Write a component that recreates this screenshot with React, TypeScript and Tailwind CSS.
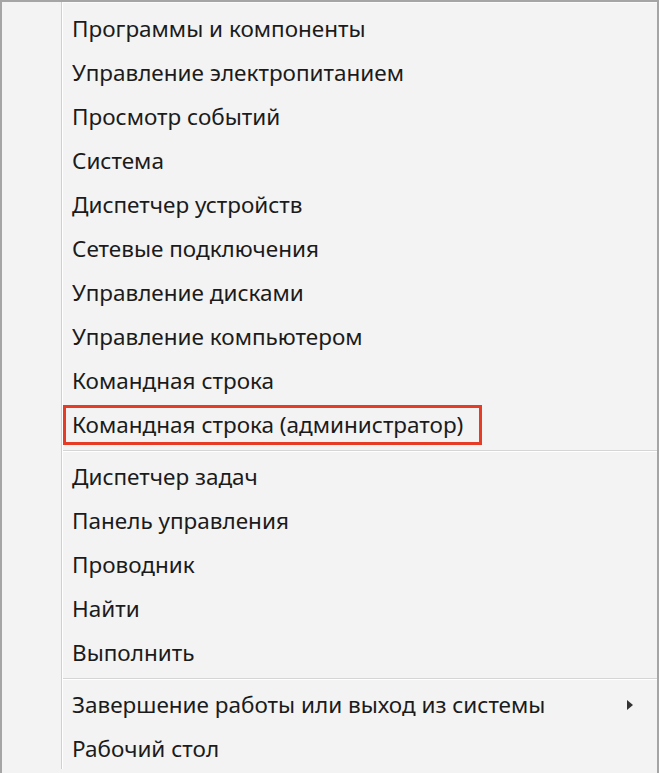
import React from 'react';

const group1 = [
  'Программы и компоненты',
  'Управление электропитанием',
  'Просмотр событий',
  'Система',
  'Диспетчер устройств',
  'Сетевые подключения',
  'Управление дисками',
  'Управление компьютером',
  'Командная строка',
];

const group2 = ['Диспетчер задач', 'Панель управления', 'Проводник', 'Найти', 'Выполнить'];

const Row: React.FC<{ label: string; arrow?: boolean }> = ({ label, arrow }) => (
  <div className="h-[44px] flex items-center pl-[9px] pr-[24px]">
    <span className="flex-1 whitespace-nowrap">{label}</span>
    {arrow && (
      <svg width="6" height="10" viewBox="0 0 6 10">
        <path d="M0 0 L6 5 L0 10 Z" fill="#333" />
      </svg>
    )}
  </div>
);

const Separator: React.FC = () => (
  <div className="h-[8px] flex flex-col justify-center">
    <div className="h-px bg-[#d5d5d5]" />
    <div className="h-px bg-white" />
  </div>
);

const App: React.FC = () => {
  return (
    <div
      className="w-[659px] h-[773px] bg-[#f3f3f3] border-t-2 border-x-2 border-[#a5a5a5] flex text-[#1b1b1b] text-[22.5px] leading-none overflow-hidden"
      style={{ fontFamily: '"Noto Sans", "Open Sans", sans-serif' }}
    >
      <div className="w-[59px] shrink-0" />
      <div className="w-px bg-[#d0d0d0] mb-[4px]" />
      <div className="w-px bg-white mb-[4px]" />
      <div className="flex-1 pt-[4px] border-t border-[#fbfbfb]">
        {group1.map(l => (
          <Row key={l} label={l} />
        ))}
        <div className="h-[44px] py-[2px]">
          <div className="h-full w-[419px] border-[3px] border-[#e63b25] flex items-center pl-[6px] whitespace-nowrap">
            Командная строка (администратор)
          </div>
        </div>
        <Separator />
        {group2.map(l => (
          <Row key={l} label={l} />
        ))}
        <Separator />
        <Row label="Завершение работы или выход из системы" arrow />
        <Row label="Рабочий стол" />
      </div>
    </div>
  );
};

export default App;
